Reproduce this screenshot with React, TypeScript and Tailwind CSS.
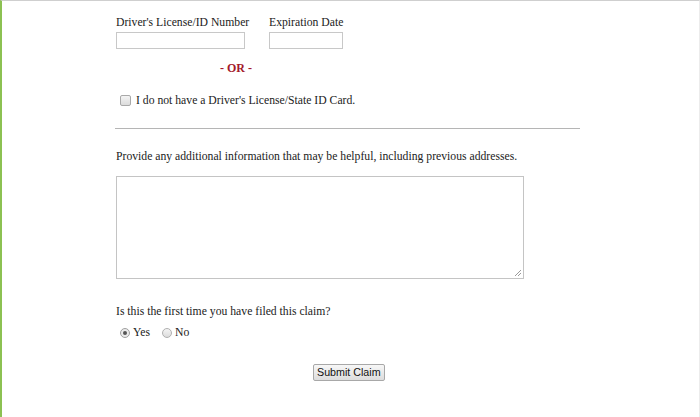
export default function App() {
  return (
    <div className="w-[700px] h-[417px] bg-white border-t border-[#cfcfcf] border-l-2 border-l-[#8cc152] border-r border-r-[#ececec] text-[#222] text-[11.7px] leading-[15px] [font-family:'Liberation_Serif',serif] overflow-hidden">
      <div className="pl-[114px] pt-[14px]">
        <div className="flex gap-[24px]">
          <div className="flex flex-col w-[129px]">
            <label className="h-[17px] whitespace-nowrap">Driver's License/ID Number</label>
            <input type="text" className="w-[129px] h-[17px] border border-[#c8c8c8] bg-white" />
          </div>
          <div className="flex flex-col">
            <label className="h-[17px] whitespace-nowrap">Expiration Date</label>
            <input type="text" className="w-[74px] h-[17px] border border-[#c8c8c8] bg-white" />
          </div>
        </div>

        <div className="mt-[12px] ml-[104px] text-[#a3192b] font-bold text-[12px]">- OR -</div>

        <label className="mt-[17px] flex items-center">
          <span className="ml-[4px] w-[11px] h-[11px] rounded-[2px] border border-[#a9a9a9] bg-gradient-to-b from-[#f4f4f4] to-[#dcdcdc]" />
          <span className="ml-[5px]">I do not have a Driver's License/State ID Card.</span>
        </label>

        <hr className="mt-[20px] w-[465px] -ml-[1px] border-0 border-t-[1.5px] border-[#b5b5b5]" />

        <p className="mt-[20px]">Provide any additional information that may be helpful, including previous addresses.</p>

        <div className="relative mt-[12px] w-[408px] h-[103px] border border-[#c4c4c4] bg-white">
          <svg className="absolute right-[1px] bottom-[1px]" width="8" height="8" viewBox="0 0 8 8">
            <path d="M7 1L1 7M7 4L4 7" stroke="#9a9a9a" strokeWidth="1" />
          </svg>
        </div>

        <p className="mt-[25px]">Is this the first time you have filed this claim?</p>

        <div className="mt-[6px] flex items-center">
          <span className="ml-[4px] w-[10px] h-[10px] rounded-full border border-[#a0a0a0] bg-[#eaeaea] flex items-center justify-center">
            <span className="w-[4px] h-[4px] rounded-full bg-[#555]" />
          </span>
          <span className="ml-[3px]">Yes</span>
          <span className="ml-[12px] w-[10px] h-[10px] rounded-full border border-[#b0b0b0] bg-gradient-to-b from-[#f4f4f4] to-[#dcdcdc]" />
          <span className="ml-[3px]">No</span>
        </div>

        <div className="mt-[24px] ml-[197px]">
          <button className="h-[17px] px-[3px] border border-[#a8a8a8] rounded-[2px] bg-gradient-to-b from-[#f7f7f7] to-[#dddddd] text-[10.7px] leading-[15px] text-[#111] [font-family:'Liberation_Sans',sans-serif]">
            Submit Claim
          </button>
        </div>
      </div>
    </div>
  );
}
